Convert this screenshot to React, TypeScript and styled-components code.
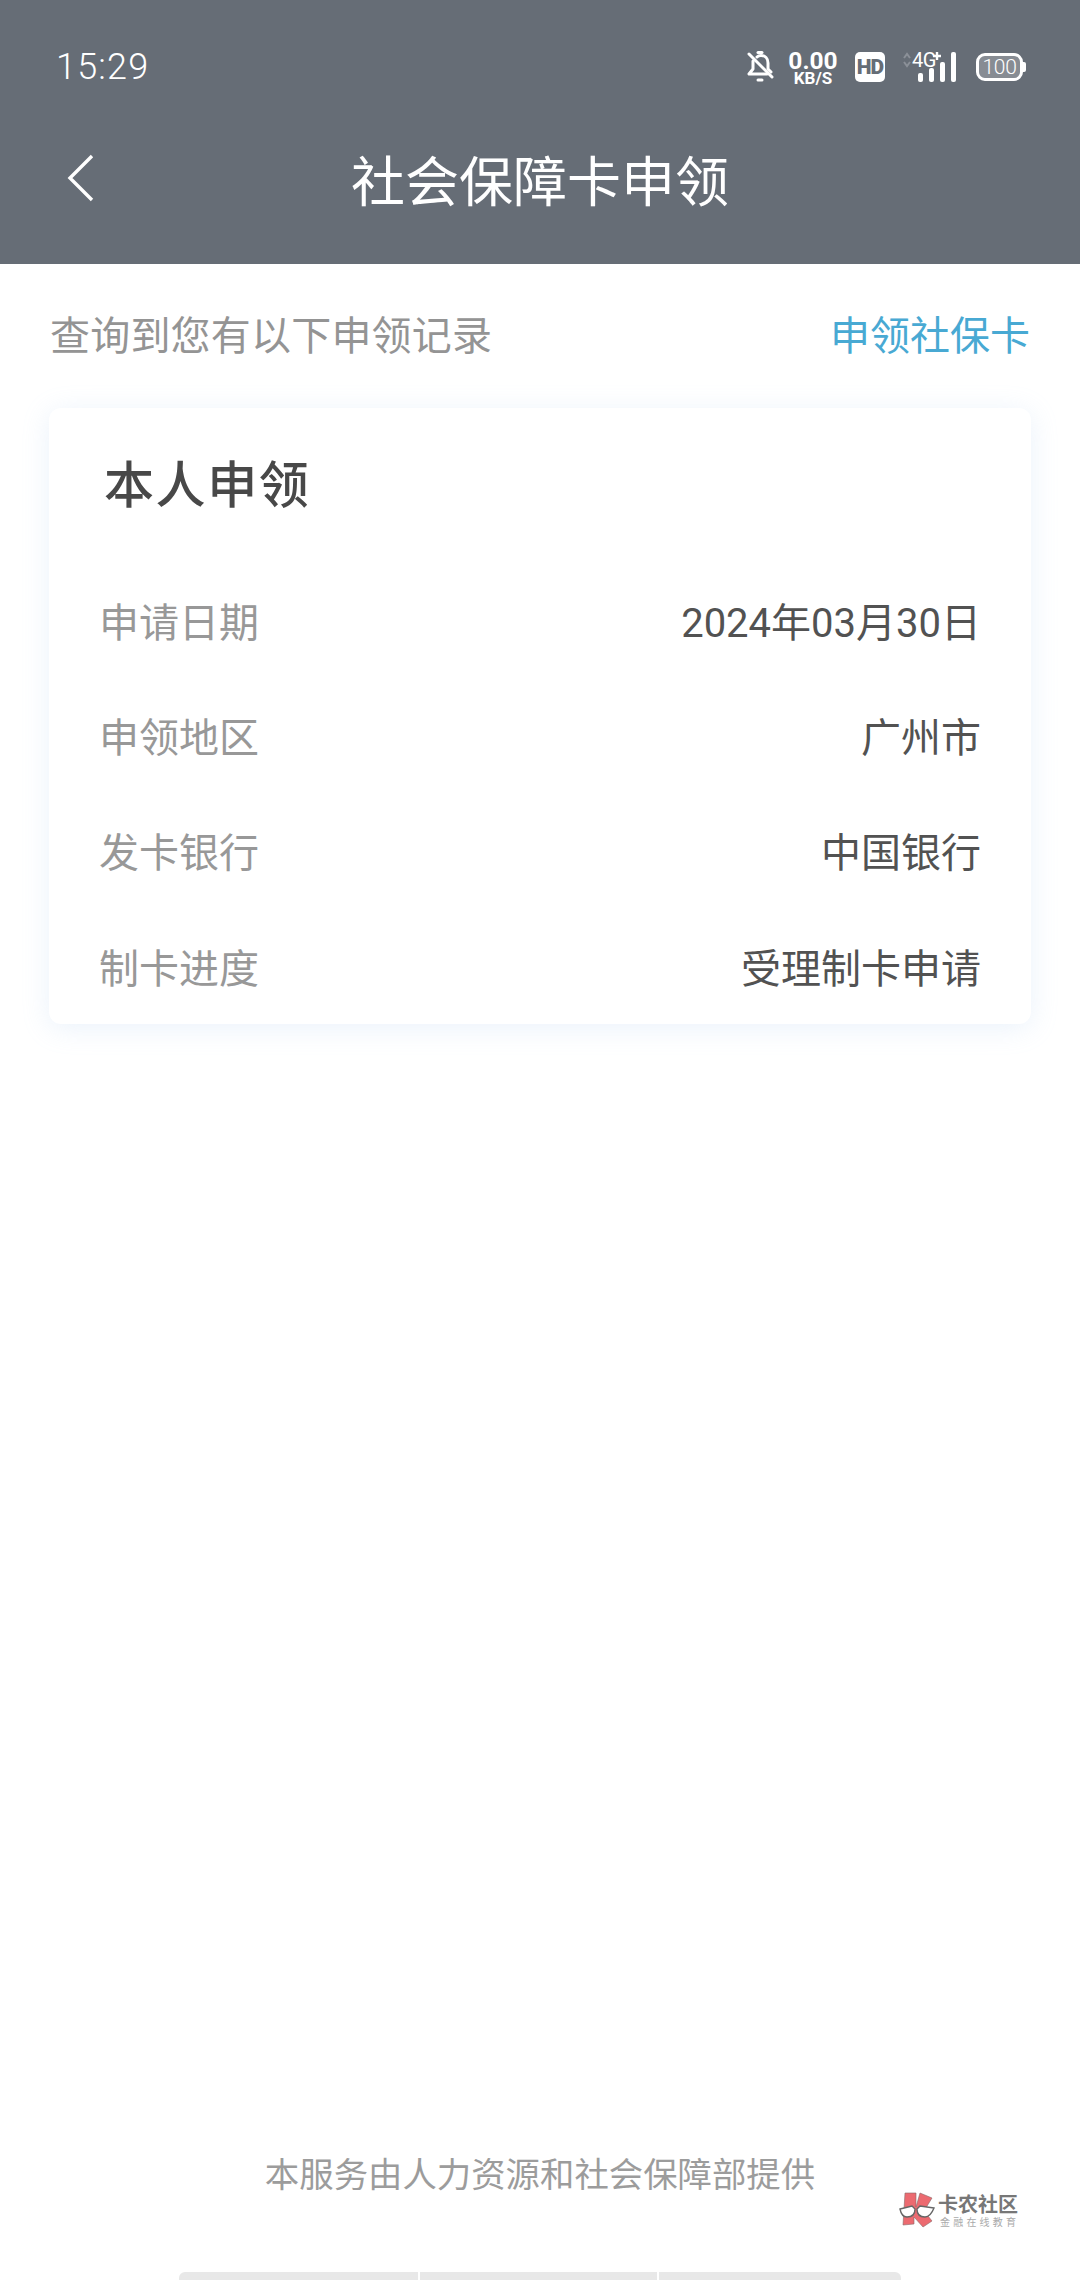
import React from "react";
import styled, { createGlobalStyle } from "styled-components";

const Global = createGlobalStyle`
  html, body { margin: 0; padding: 0; background: #fff; }
  body { font-family: Roboto, "Noto Sans CJK SC", sans-serif; }
`;

const Page = styled.div`
  position: relative;
  width: 1080px;
  height: 2280px;
  display: flex;
  flex-direction: column;
  background: #fff;
  overflow: hidden;
`;

const Header = styled.header`
  height: 264px;
  flex: none;
  background: #666d76;
  color: #fff;
  display: flex;
  flex-direction: column;
`;

const StatusBar = styled.div`
  height: 134px;
  flex: none;
  box-sizing: border-box;
  padding: 0 57px 0 56px;
  display: flex;
  align-items: center;
  justify-content: space-between;
`;

const Clock = styled.span`
  font-size: 36px;
  line-height: 136px;
  letter-spacing: 1.2px;
  font-weight: 300;
  color: #fff;
`;

const StatusIcons = styled.div`
  display: flex;
  align-items: center;
  height: 34px;
`;

const Speed = styled.div`
  width: 48px;
  margin: 0 18px 0 15px;
  display: flex;
  flex-direction: column;
  align-items: center;
  font-weight: 700;
  color: #fff;
`;

const SpeedValue = styled.span`
  font-size: 24.5px;
  line-height: 22px;
`;

const SpeedUnit = styled.span`
  font-size: 17px;
  line-height: 13px;
`;

const HdBadge = styled.span`
  width: 30px;
  height: 30px;
  border-radius: 5px;
  background: #fff;
  color: #666d76;
  font-size: 21px;
  font-weight: 900;
  line-height: 30px;
  text-align: center;
  letter-spacing: -1px;
`;

const SignalWrap = styled.div`
  position: relative;
  width: 56px;
  height: 32px;
  margin-left: 16px;
`;

const NetworkLabel = styled.span`
  position: absolute;
  left: 11px;
  top: 0;
  font-size: 20px;
  line-height: 18px;
  font-weight: 400;
  letter-spacing: -0.5px;
  color: #fff;
`;

const Battery = styled.div`
  position: relative;
  margin-left: 19px;
  width: 47px;
  height: 28px;
  box-sizing: border-box;
  border: 3px solid #fff;
  border-radius: 9px;
  display: flex;
  align-items: center;
  justify-content: center;
  font-size: 21px;
  font-weight: 300;
  letter-spacing: -0.3px;
  color: #fff;
  background: #878c93;
  background-clip: padding-box;

  &::after {
    content: "";
    position: absolute;
    right: -6px;
    top: 6px;
    width: 3px;
    height: 10px;
    border-radius: 0 2px 2px 0;
    background: #fff;
  }
`;

const NavBar = styled.div`
  position: relative;
  height: 92px;
  margin-top: -1px;
  display: flex;
  align-items: center;
  justify-content: center;
`;

const BackButton = styled.span`
  position: absolute;
  left: 66px;
  top: 21px;
  display: block;
  width: 30px;
  height: 50px;
`;

const NavTitle = styled.h1`
  margin: 0;
  font-size: 54px;
  font-weight: 400;
  line-height: 70px;
  color: #fff;
  font-family: "Noto Sans CJK SC", sans-serif;
`;

const Intro = styled.div`
  height: 138px;
  flex: none;
  box-sizing: border-box;
  padding: 0 50px;
  display: flex;
  align-items: center;
  justify-content: space-between;
  font-family: "Noto Sans CJK SC", sans-serif;
  font-size: 40px;
`;

const IntroText = styled.span`
  color: #949494;
  letter-spacing: 0.2px;
`;

const ApplyLink = styled.a`
  color: #48a9d3;
  text-decoration: none;
`;

const Card = styled.section`
  width: 982px;
  height: 616px;
  margin: 6px 0 0 49px;
  box-sizing: border-box;
  padding: 31px 50px 0;
  border-radius: 12px;
  background: #fff;
  box-shadow: 0 4px 28px rgba(150, 190, 235, 0.2);
`;

const CardTitle = styled.h2`
  margin: 0 0 39px 5px;
  font-family: "Noto Sans CJK SC", sans-serif;
  font-size: 50px;
  line-height: 84px;
  font-weight: 500;
  color: #484848;
  letter-spacing: 1.6px;
`;

const Row = styled.div`
  height: 115.4px;
  display: flex;
  align-items: center;
  justify-content: space-between;
  font-family: Roboto, "Noto Sans CJK SC", sans-serif;
  font-size: 40px;
`;

const RowLabel = styled.span`
  color: #989898;
`;

const RowValue = styled.span`
  color: #525252;
`;

const Footer = styled.footer`
  margin-top: auto;
  height: 138px;
  display: flex;
  flex-direction: column;
  align-items: center;
  justify-content: flex-start;
`;

const FooterText = styled.p`
  margin: 0;
  height: 130px;
  line-height: 60px;
  font-family: "Noto Sans CJK SC", sans-serif;
  font-size: 34.4px;
  color: #9c9c9c;
`;

const HomeBar = styled.div`
  width: 722px;
  height: 8px;
  flex: none;
  display: grid;
  grid-template-columns: 239px 237px 242px;
  column-gap: 2px;
`;

const HomeSegment = styled.span<{ $side?: "left" | "right" }>`
  background: #e8e8e8;
  border-radius: ${(p) =>
    p.$side === "left" ? "6px 0 0 0" : p.$side === "right" ? "0 6px 0 0" : "0"};
`;

const Watermark = styled.div`
  position: absolute;
  left: 899px;
  top: 2192px;
  display: flex;
  align-items: center;
  gap: 3px;
`;

const WatermarkText = styled.div`
  display: flex;
  flex-direction: column;
  font-family: "Noto Sans CJK SC", sans-serif;
`;

const WatermarkName = styled.span`
  font-size: 20px;
  line-height: 22px;
  font-weight: 700;
  color: #777;
`;

const WatermarkSlogan = styled.span`
  font-size: 10px;
  line-height: 13px;
  color: #aaa;
  letter-spacing: 3.2px;
  margin-left: 2px;
`;

const rows = [
  ["申请日期", "2024年03月30日"],
  ["申领地区", "广州市"],
  ["发卡银行", "中国银行"],
  ["制卡进度", "受理制卡申请"],
];

export default function App() {
  return (
    <Page>
      <Global />
      <Header>
        <StatusBar>
          <Clock>15:29</Clock>
          <StatusIcons>
            <svg width="28" height="34" viewBox="0 0 28 34" fill="none" stroke="#fff" strokeWidth="3" strokeLinejoin="round" strokeLinecap="round">
              <path d="M11 7c1-1 2-1.500 4-1.500 4 0 7 3 7 7.500v6l3 3" />
              <path d="M7 11v8l-4 5h18" />
              <path d="M12 2.500h4" />
              <path d="M3 4l23 23" />
              <path d="M12 30h4" />
            </svg>
            <Speed>
              <SpeedValue>0.00</SpeedValue>
              <SpeedUnit>KB/S</SpeedUnit>
            </Speed>
            <HdBadge>HD</HdBadge>
            <SignalWrap>
              <svg width="56" height="32" viewBox="0 0 56 32" style={{ position: "absolute", left: 0, top: 0 }}>
                <path d="M3 7l3-4 3 4M3 11l3 4 3-4" fill="none" stroke="#8b9098" strokeWidth="2" />
                <path d="M32 5h8M36 1v8" stroke="#fff" strokeWidth="2.4" />
                <rect x="17" y="22" width="5" height="9" rx="2" fill="#fff" />
                <rect x="28" y="17" width="5" height="14" rx="2" fill="#fff" />
                <rect x="39" y="11" width="5" height="20" rx="2" fill="#fff" />
                <rect x="50" y="1" width="5" height="30" rx="2" fill="#fff" />
              </svg>
              <NetworkLabel>4G</NetworkLabel>
            </SignalWrap>
            <Battery>100</Battery>
          </StatusIcons>
        </StatusBar>
        <NavBar>
          <BackButton>
            <svg width="30" height="50" viewBox="0 0 30 50" fill="none" stroke="#fff" strokeWidth="3.4">
              <path d="M26 2L4 24l22 22" />
            </svg>
          </BackButton>
          <NavTitle>社会保障卡申领</NavTitle>
        </NavBar>
      </Header>
      <Intro>
        <IntroText>查询到您有以下申领记录</IntroText>
        <ApplyLink>申领社保卡</ApplyLink>
      </Intro>
      <Card>
        <CardTitle>本人申领</CardTitle>
        {rows.map(([label, value]) => (
          <Row key={label}>
            <RowLabel>{label}</RowLabel>
            <RowValue>{value}</RowValue>
          </Row>
        ))}
      </Card>
      <Footer>
        <FooterText>本服务由人力资源和社会保障部提供</FooterText>
        <HomeBar>
          <HomeSegment $side="left" />
          <HomeSegment />
          <HomeSegment $side="right" />
        </HomeBar>
      </Footer>
      <Watermark>
        <svg width="36" height="36" viewBox="0 0 36 36">
          <path d="M6 1h11v14L21 1l12 5-8 13 8 10-9 6-9-10v7l-11 1z" fill="#ec6a70" stroke="#8a6a6a" strokeWidth="0.6" />
          <path d="M1 17l12-3 3 3c0 5-3 8-8 8-3 0-6-3-7-8z" fill="#fff" stroke="#666" strokeWidth="1.4" />
          <path d="M35 16l-14-2-3 3c0 5 3 8 8 8 4 0 7-4 9-9z" fill="#fff" stroke="#666" strokeWidth="1.4" />
        </svg>
        <WatermarkText>
          <WatermarkName>卡农社区</WatermarkName>
          <WatermarkSlogan>金融在线教育</WatermarkSlogan>
        </WatermarkText>
      </Watermark>
    </Page>
  );
}
